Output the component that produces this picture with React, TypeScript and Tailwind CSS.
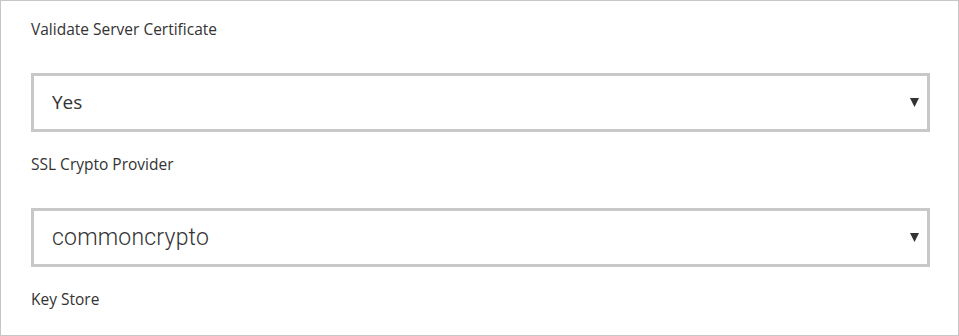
import {ReactNode} from "react"

const labelFont = {fontFamily: '"Open Sans", "Noto Sans", sans-serif'}

function Caret() {
    return (
        <svg width="9" height="9" viewBox="0 0 9 9" className="shrink-0">
            <polygon points="0,0 9,0 4.5,9" fill="#333333"/>
        </svg>
    )
}

function Label({children}: { children: ReactNode }) {
    return (
        <div className="h-[20px] text-[15.5px] leading-[20px] text-[#333333]" style={labelFont}>
            {children}
        </div>
    )
}

function Select({children, big}: { children: ReactNode, big?: boolean }) {
    return (
        <div className="mt-[34px] mb-[22px] h-[59px] border-[3px] border-[#c8c8c8] flex items-center pl-[18px] pr-[8px]">
            <span
                className={big
                    ? "flex-1 font-['Roboto',sans-serif] font-light text-[23px] tracking-[0.2px] text-[#333333] translate-y-[1px]"
                    : "flex-1 font-['Open_Sans',sans-serif] text-[19px] text-[#333333]"}>
                {children}
            </span>
            <Caret/>
        </div>
    )
}

export default function App() {
    return (
        <div className="w-[959px] h-[336px] border border-[#c6c6c6] bg-white overflow-hidden">
            <div className="pl-[30px] pr-[28px] pt-[18px]">
                <Label>Validate Server Certificate</Label>
                <Select>Yes</Select>
                <Label>SSL Crypto Provider</Label>
                <Select big>commoncrypto</Select>
                <Label>Key Store</Label>
            </div>
        </div>
    )
}
